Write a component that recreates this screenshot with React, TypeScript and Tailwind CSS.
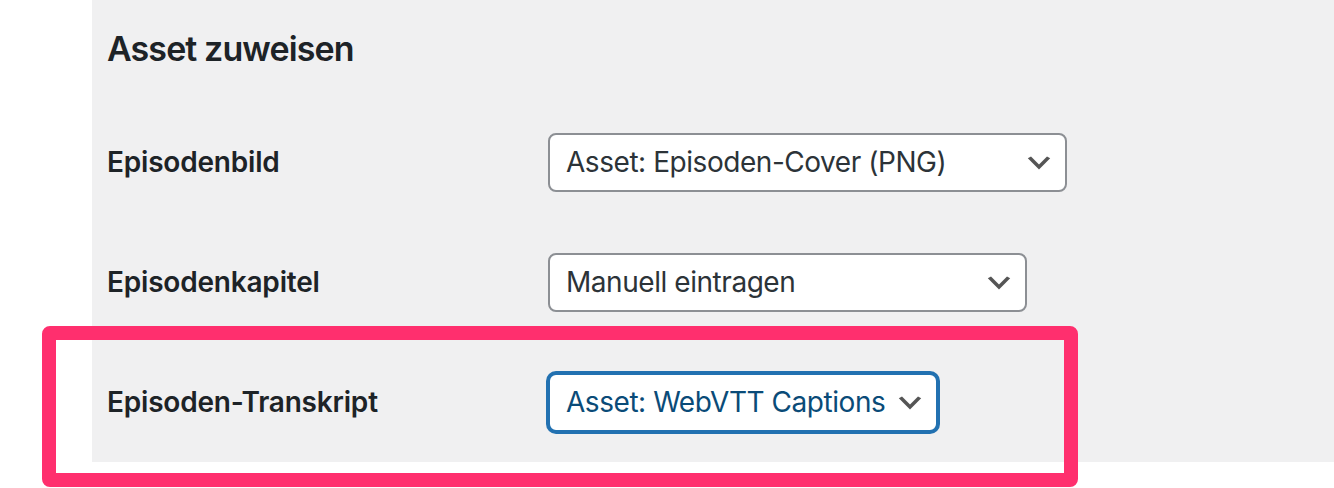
import React from "react";

type Field = {
  label: string;
  value: string;
  width: string;
  focused?: boolean;
};

const fields: Field[] = [
  { label: "Episodenbild", value: "Asset: Episoden-Cover (PNG)", width: "w-[519px]" },
  { label: "Episodenkapitel", value: "Manuell eintragen", width: "w-[479px]" },
  {
    label: "Episoden-Transkript",
    value: "Asset: WebVTT Captions",
    width: "w-[390px]",
    focused: true,
  },
];

function Chevron({ className }: { className?: string }) {
  return (
    <svg viewBox="0 0 20 20" className={className} aria-hidden="true">
      <path d="M5 6l5 5 5-5 2 1-7 7-7-7 2-1z" fill="#555" />
    </svg>
  );
}

function FakeSelect({ value, width, focused }: Field) {
  return (
    <div
      className={
        "flex h-[59px] items-center rounded-lg border-2 bg-white pl-4 pr-[10px] text-[28px] tracking-[-0.45px] " +
        width +
        (focused
          ? " border-[#2271b1] text-[#0a4b78] shadow-[0_0_0_2px_#2271b1]"
          : " border-[#8c8f94] text-[#2c3338]")
      }
    >
      <span className="flex-1 whitespace-nowrap leading-none">{value}</span>
      <Chevron className="mt-[2px] h-8 w-8 shrink-0" />
    </div>
  );
}

export default function App() {
  return (
    <div className="relative min-h-[488px] bg-white font-['Inter','Noto_Sans',sans-serif] text-[#1d2327]">
      {/* Settings panel */}
      <div className="ml-[92px] bg-[#f0f0f1] pl-[15px]">
        <h2 className="h-[102px] pt-[32px] text-[34px] font-semibold leading-[34px] tracking-[-0.9px]">
          Asset zuweisen
        </h2>
        {fields.map((f) => (
          <div key={f.label} className="flex h-[120px] items-center">
            <div className="w-[441px] text-[28px] font-semibold leading-none tracking-[-0.2px]">
              {f.label}
            </div>
            <FakeSelect {...f} />
          </div>
        ))}
      </div>

      {/* Highlight annotation */}
      <div className="pointer-events-none absolute left-[42px] top-[326px] h-[161px] w-[1036px] rounded-[8px] border-[14px] border-[#ff2f6e]" />
    </div>
  );
}
